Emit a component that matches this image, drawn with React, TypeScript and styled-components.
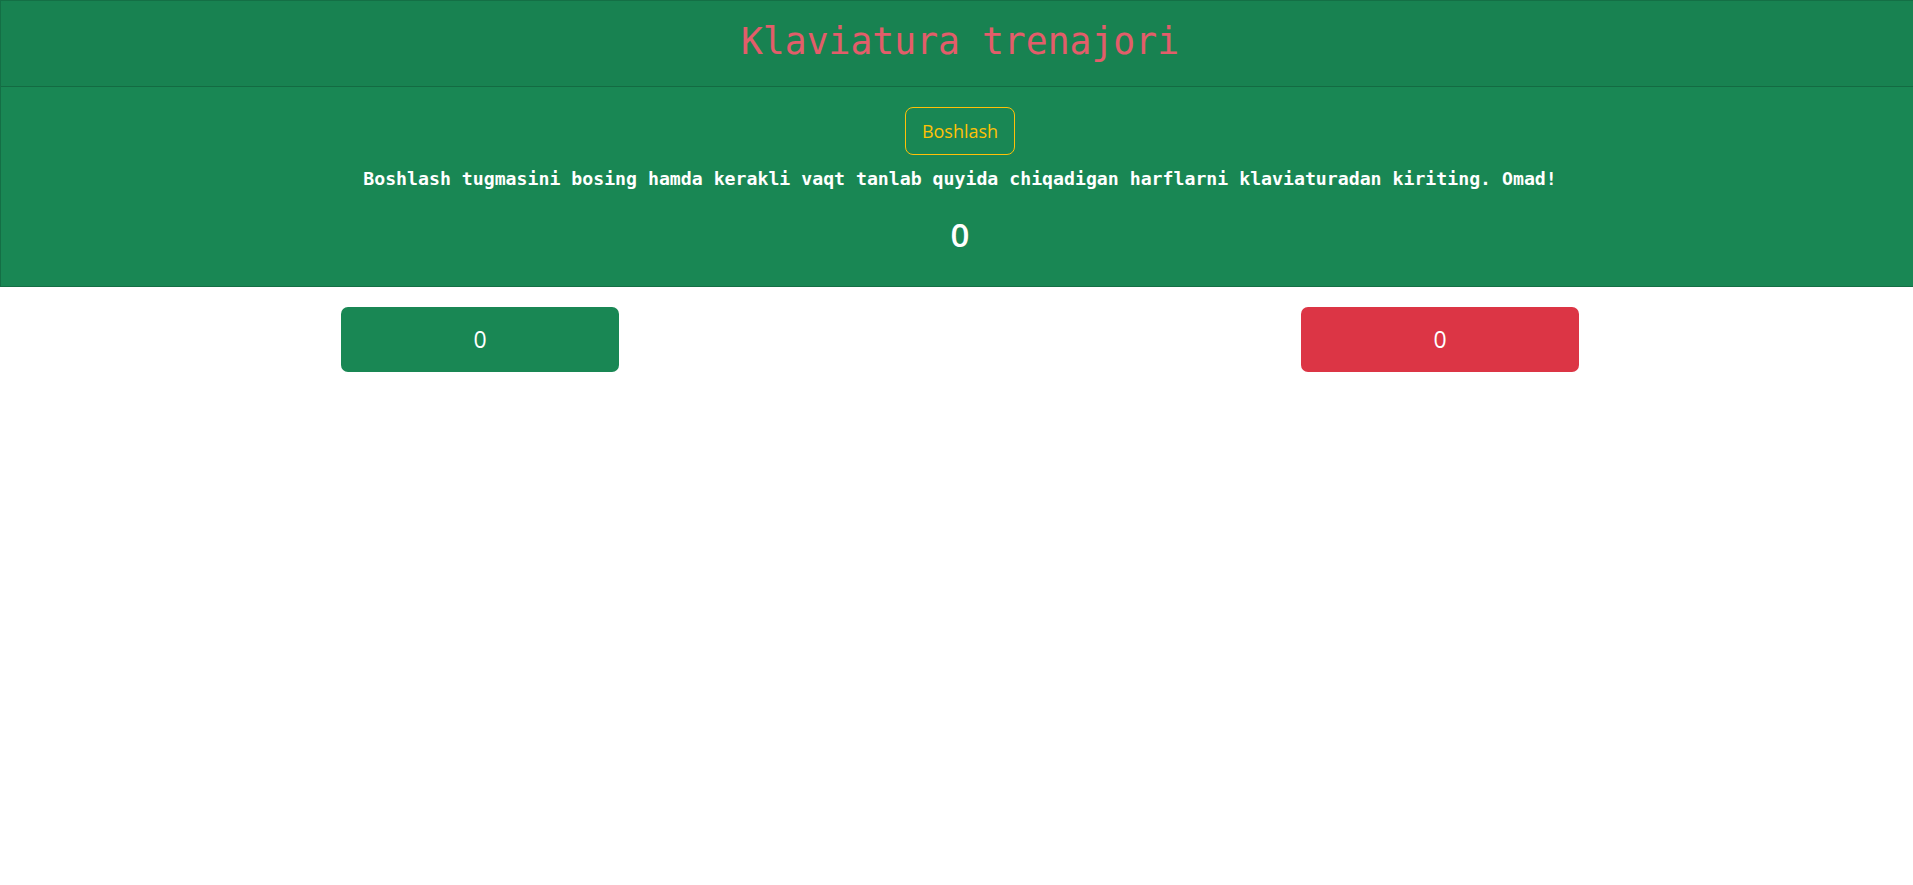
import React from "react";
import styled, { createGlobalStyle } from "styled-components";

const Global = createGlobalStyle`
  html, body { margin: 0; padding: 0; overflow: hidden; background: #fff; }
  #root { width: 1920px; }
  * { box-sizing: border-box; }
`;

const Card = styled.div`
  background: #198754;
  border: 1px solid rgba(0, 0, 0, 0.175);
`;

const CardHeader = styled.div`
  background: rgba(0, 0, 0, 0.03);
  border-bottom: 1px solid rgba(0, 0, 0, 0.175);
  padding: 17px 16px 20px;
  text-align: center;
`;

const Title = styled.h1`
  margin: 0;
  font-family: "DejaVu Sans Mono", "Liberation Mono", monospace;
  font-weight: 400;
  font-size: 36.4px;
  line-height: 48px;
  color: #e35d6a;
`;

const CardBody = styled.div`
  padding: 20px 16px 31px;
  display: flex;
  flex-direction: column;
  align-items: center;
`;

const OutlineButton = styled.button`
  height: 48px;
  width: 110px;
  padding: 0;
  background: transparent;
  border: 1px solid #ffc107;
  border-radius: 8px;
  color: #ffc107;
  font-family: "Open Sans", "Noto Sans", sans-serif;
  font-size: 18px;
  cursor: pointer;
`;

const Lead = styled.p`
  margin: 10px 0 0;
  font-family: "DejaVu Sans Mono", "Liberation Mono", monospace;
  font-weight: 700;
  font-size: 18.2px;
  line-height: 27.5px;
  color: #fff;
`;

const Timer = styled.h2`
  margin: 22px 0 0;
  font-family: "Open Sans", "Noto Sans", sans-serif;
  font-weight: 600;
  font-size: 33px;
  line-height: 40px;
  color: #fff;
`;

const ScoreRow = styled.div`
  width: 1238px;
  margin: 20px auto 0;
  display: flex;
  justify-content: space-between;
`;

const ScoreBox = styled.div<{ $tone: "ok" | "bad" }>`
  width: 278px;
  height: 65px;
  border-radius: 7px;
  background: ${(p) => (p.$tone === "ok" ? "#198754" : "#dc3545")};
  color: #fff;
  display: flex;
  align-items: center;
  justify-content: center;
  font-family: "Open Sans", "Noto Sans", sans-serif;
  font-size: 23px;
`;

export default function App() {
  return (
    <>
      <Global />
      <Card>
        <CardHeader>
          <Title>Klaviatura trenajori</Title>
        </CardHeader>
        <CardBody>
          <OutlineButton>Boshlash</OutlineButton>
          <Lead>
            Boshlash tugmasini bosing hamda kerakli vaqt tanlab quyida chiqadigan harflarni klaviaturadan kiriting. Omad!
          </Lead>
          <Timer>0</Timer>
        </CardBody>
      </Card>
      <ScoreRow>
        <ScoreBox $tone="ok">0</ScoreBox>
        <ScoreBox $tone="bad">0</ScoreBox>
      </ScoreRow>
    </>
  );
}
